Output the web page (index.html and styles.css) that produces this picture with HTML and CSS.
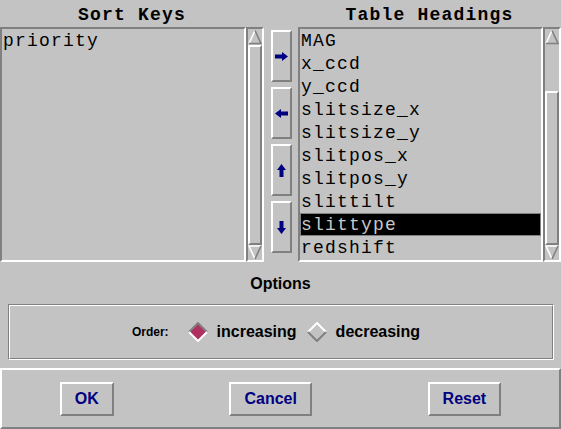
FILE: index.html
```html
<!DOCTYPE html>
<html>
<head>
<meta charset="utf-8">
<link rel="stylesheet" href="styles.css">
</head>
<body>
<div class="top">
  <div class="col col-left">
    <div class="hdr">Sort Keys</div>
    <div class="listwrap">
      <div class="list">
        <div class="item">priority</div>
      </div>
      <div class="sb">
        <div class="sb-arrow up"><svg width="14" height="16" viewBox="0 0 14 16"><polyline points="1,14.5 7,1.5" fill="none" stroke="#fff" stroke-width="1.6"/><polyline points="7,1.5 13,14.5 1,14.5" fill="none" stroke="#808080" stroke-width="1.6"/></svg></div>
        <div class="sb-thumb"></div>
        <div class="sb-arrow down"><svg width="14" height="15" viewBox="0 0 14 15"><polyline points="13,1 1,1 7,14" fill="none" stroke="#fff" stroke-width="1.6"/><polyline points="7,14 13,1" fill="none" stroke="#808080" stroke-width="1.6"/></svg></div>
      </div>
    </div>
  </div>
  <div class="btncol">
    <div class="abtn"><svg width="13" height="9" viewBox="0 0 13 9"><polygon points="0,2.5 7,2.5 7,0 13,4.5 7,9 7,6.5 0,6.5" fill="#000080"/></svg></div>
    <div class="abtn"><svg width="13" height="9" viewBox="0 0 13 9"><polygon points="13,2.5 6,2.5 6,0 0,4.5 6,9 6,6.5 13,6.5" fill="#000080"/></svg></div>
    <div class="abtn"><svg width="9" height="13" viewBox="0 0 9 13"><polygon points="4.5,0 9,6 6.5,6 6.5,13 2.5,13 2.5,6 0,6" fill="#000080"/></svg></div>
    <div class="abtn"><svg width="9" height="13" viewBox="0 0 9 13"><polygon points="4.5,13 9,7 6.5,7 6.5,0 2.5,0 2.5,7 0,7" fill="#000080"/></svg></div>
  </div>
  <div class="col col-right">
    <div class="hdr">Table Headings</div>
    <div class="listwrap">
      <div class="list">
        <div class="item">MAG</div>
        <div class="item">x_ccd</div>
        <div class="item">y_ccd</div>
        <div class="item">slitsize_x</div>
        <div class="item">slitsize_y</div>
        <div class="item">slitpos_x</div>
        <div class="item">slitpos_y</div>
        <div class="item">slittilt</div>
        <div class="item sel">slittype</div>
        <div class="item">redshift</div>
      </div>
      <div class="sb">
        <div class="sb-arrow up"><svg width="14" height="16" viewBox="0 0 14 16"><polyline points="1,14.5 7,1.5" fill="none" stroke="#fff" stroke-width="1.6"/><polyline points="7,1.5 13,14.5 1,14.5" fill="none" stroke="#808080" stroke-width="1.6"/></svg></div>
        <div class="sb-gap"></div>
        <div class="sb-thumb"></div>
        <div class="sb-arrow down"><svg width="14" height="15" viewBox="0 0 14 15"><polyline points="13,1 1,1 7,14" fill="none" stroke="#fff" stroke-width="1.6"/><polyline points="7,14 13,1" fill="none" stroke="#808080" stroke-width="1.6"/></svg></div>
      </div>
    </div>
  </div>
</div>
<div class="opt-label">Options</div>
<div class="opts">
  <div class="opts-in">
    <span class="order">Order:</span>
    <span class="radio"><svg width="20" height="20" viewBox="0 0 20 20"><polygon points="10,1 19,10 10,19 1,10" fill="#b03060"/><polyline points="1,10 10,1 19,10" fill="none" stroke="#808080" stroke-width="2"/><polyline points="1,10 10,19 19,10" fill="none" stroke="#fff" stroke-width="2"/></svg>increasing</span>
    <span class="radio"><svg width="20" height="20" viewBox="0 0 20 20"><polyline points="1,10 10,1 19,10" fill="none" stroke="#fff" stroke-width="2"/><polyline points="1,10 10,19 19,10" fill="none" stroke="#808080" stroke-width="2"/></svg>decreasing</span>
  </div>
</div>
<div class="bottom">
  <div class="bcell"><div class="btn">OK</div></div>
  <div class="bcell"><div class="btn">Cancel</div></div>
  <div class="bcell"><div class="btn">Reset</div></div>
</div>
</body>
</html>
```
FILE: styles.css
```css
* { box-sizing: border-box; }
html, body { margin: 0; padding: 0; }
body {
  background: #c3c3c3;
  width: 561px;
  height: 429px;
  overflow: hidden;
  font-family: "Liberation Sans", Arial, sans-serif;
  color: #000;
}
.top { display: flex; height: 262px; }
.col { display: flex; flex-direction: column; }
.col-left { width: 264px; }
.col-right { width: 263px; }
.hdr {
  height: 27px;
  padding-top: 3px;
  text-align: center;
  font: bold 18px/24px "Liberation Mono", monospace;
  letter-spacing: 1.2px;
  white-space: nowrap;
}
.listwrap { flex: 1; display: flex; }
.list {
  flex: 1;
  border: 2px solid;
  border-color: #808080 #fff #fff #808080;
  font: 18px/22px "Liberation Mono", monospace;
  letter-spacing: 1.2px;
  overflow: hidden;
}
.item { height: 23px; padding: 1px 0 0 1px; white-space: nowrap; }
.item.sel { background: #000; color: #c8c8c8; box-shadow: inset 0 0 0 1px #808080; }
.sb {
  width: 18px;
  border: 2px solid;
  border-color: #808080 #fff #fff #808080;
  display: flex;
  flex-direction: column;
}
.sb-arrow { display: flex; justify-content: center; }
.sb-arrow.up { height: 16px; }
.sb-arrow.down { height: 15px; }
.sb-arrow svg { display: block; }
.sb-gap { height: 46px; }
.sb-thumb {
  flex: 1;
  border: 2px solid;
  border-color: #fff #808080 #808080 #fff;
}
.btncol {
  width: 34px;
  padding: 30px 0 0 7px;
  display: flex;
  flex-direction: column;
  gap: 5px;
}
.abtn {
  width: 21px;
  height: 52px;
  border: 2px solid;
  border-color: #fff #808080 #808080 #fff;
  display: flex;
  align-items: center;
  justify-content: center;
}
.abtn svg { display: block; }
.opt-label {
  height: 42px;
  padding-top: 1px;
  text-align: center;
  font: bold 16px/41px "Liberation Sans", Arial, sans-serif;
}
.opts {
  margin: 0 7px 0 8px;
  height: 56px;
  border: 1px solid;
  border-color: #808080 #fff #fff #808080;
}
.opts-in {
  height: 100%;
  border: 1px solid;
  border-color: #fff #808080 #808080 #fff;
  display: flex;
  align-items: center;
  justify-content: center;
}
.order { font: bold 12px "Liberation Sans", Arial, sans-serif; margin-right: 19px; }
.radio {
  display: flex;
  align-items: center;
  font: bold 16px "Liberation Sans", Arial, sans-serif;
}
.radio svg { display: block; margin-right: 9px; }
.radio + .radio { margin-left: 10px; margin-right: 10px; }
.bottom {
  margin-top: 8px;
  height: 61px;
  border: 2px solid;
  border-color: #fff #808080 #808080 #fff;
  display: flex;
  align-items: center;
}
.bcell { flex: 1 1 auto; display: flex; justify-content: center; }
.btn {
  height: 34px;
  padding: 0 13px;
  border: 2px solid;
  border-color: #fff #808080 #808080 #fff;
  font: bold 16px/30px "Liberation Sans", Arial, sans-serif;
  color: #000080;
}
```
